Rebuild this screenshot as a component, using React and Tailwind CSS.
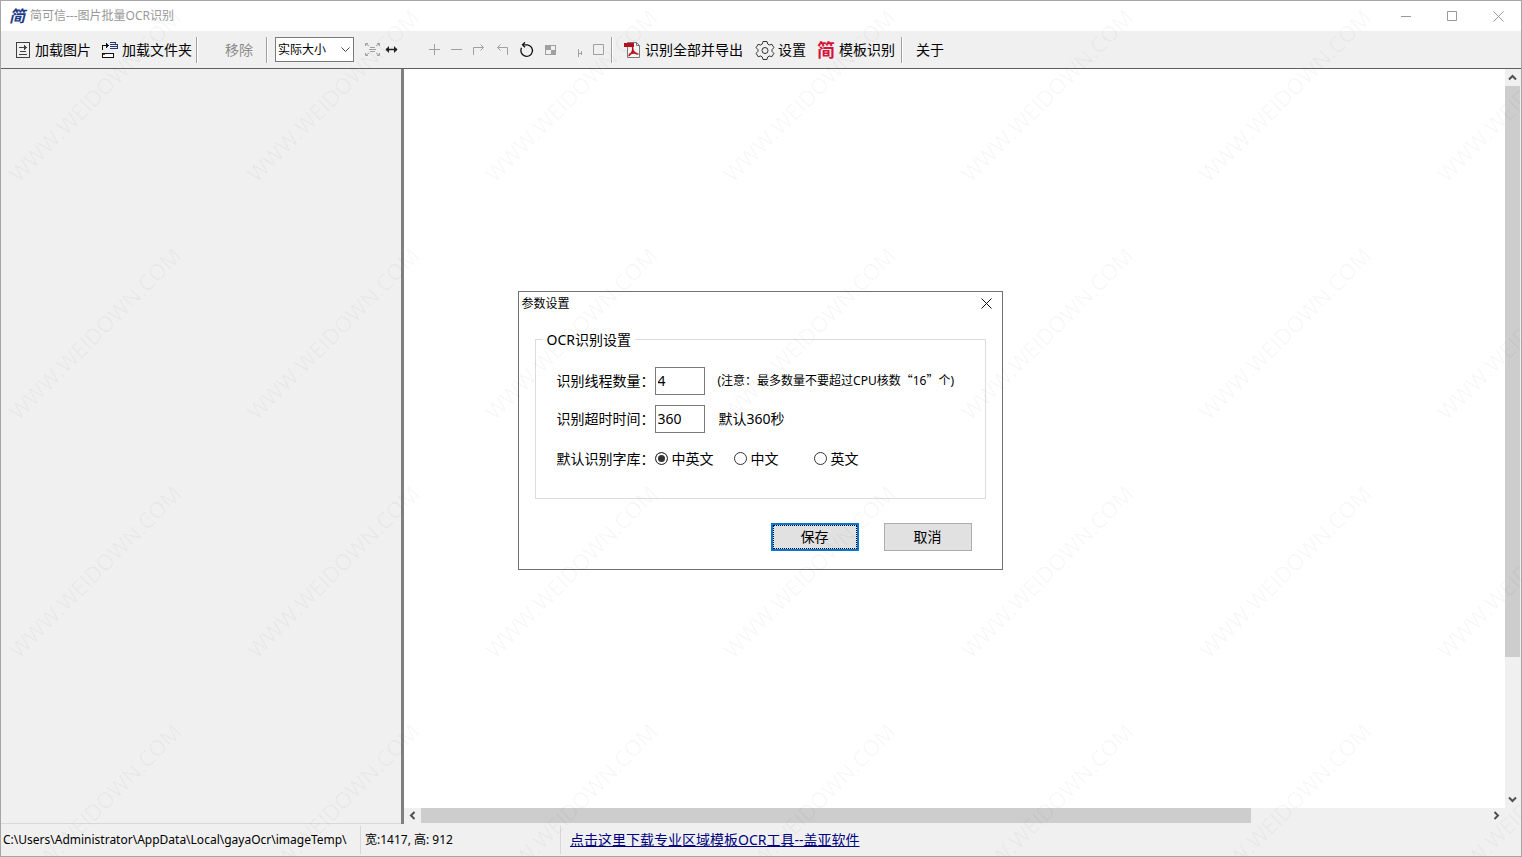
function LoadImageIcon() {
    return (
        <svg width="16" height="18" viewBox="0 0 16 18" fill="none" stroke="#404040" shapeRendering="crispEdges">
            <path d="M1.5 1.5h13v15h-13z" />
            <path d="M4 6.5h8M5 10.5h6M4 13.5h8" />
            <path d="M9.5 4v5M10.5 5v3" />
        </svg>
    )
}

function LoadFolderIcon() {
    return (
        <svg width="18" height="18" viewBox="0 0 18 18" fill="none" shapeRendering="crispEdges">
            <path d="M1.5 9V4.5H6" stroke="#111" />
            <path d="M5.5 2v5M6.5 3v3M7.5 4v1" stroke="#111" />
            <path d="M1.5 12.5h11v4h-11z" stroke="#111" fill="#fff" />
            <path d="M2 13.5h2" stroke="#e02020" />
            <path d="M9 1.5h5M9 3.5h7M9 5.5h7M9 7.5h7M14.5 1v2M16.5 3v5" stroke="#27357e" />
        </svg>
    )
}

function PdfIcon() {
    return (
        <svg width="18" height="18" viewBox="0 0 18 18" fill="none">
            <path d="M4.5 1.5h9l3 3v12h-12z" fill="#f6f6f6" stroke="#777" />
            <path d="M13.5 1.5v3h3" stroke="#777" />
            <path d="M1 2h10v4H1z" fill="#b5121b" />
            <path d="M9.5 6c1 3 0 6-4 9M9.5 8c1 3 3 5 6 5M6 13.5c2-1 5-2 8-1" stroke="#b5121b" strokeWidth="1.5" />
        </svg>
    )
}

function GearIcon() {
    return (
        <svg width="20" height="20" viewBox="0 0 20 20" fill="none" stroke="#333" strokeLinejoin="round">
            <path d="M8 1.5h4l.7 2.5 1.6 1 2.6-.7 2 3.400-1.9 1.9v1.8l1.9 1.9-2 3.400-2.6-.7-1.6 1-.7 2.5H8l-.7-2.5-1.6-1-2.6.7-2-3.400L3 11.4V9.6L1.1 7.7l2-3.400 2.6.7 1.6-1z" />
            <circle cx="10" cy="10.5" r="3" />
        </svg>
    )
}

function Chevron({ d }) {
    return (
        <svg width="9" height="9" viewBox="0 0 9 9" fill="none" stroke="#505050" strokeWidth="2">
            <path d={d} />
        </svg>
    )
}

function Separator() {
    return <div className="h-[26px] w-[2px] shrink-0 border-l border-[#a0a0a0] bg-white" />
}

function ToolButton({ icon, label, className = "" }) {
    return (
        <button className={`flex shrink-0 items-center text-sm whitespace-nowrap ${className}`}>
            {icon}
            <span>{label}</span>
        </button>
    )
}

function IconButton({ label, children, className = "" }) {
    return (
        <button aria-label={label} className={`flex h-4 shrink-0 items-center justify-center ${className}`}>
            {children}
        </button>
    )
}

function TitleBar() {
    return (
        <header className="flex h-[30px] shrink-0 items-center bg-white pl-2 text-xs text-[#999]">
            <span className="w-[21px] text-base leading-4 font-bold text-[#1f3b87] italic">简</span>
            <h1>简可信---图片批量OCR识别</h1>
            <div className="ml-auto flex">
                <button aria-label="最小化" className="flex h-[30px] w-[45px] items-center justify-center">
                    <svg width="11" height="11" stroke="#999"><path d="M0 5.5h10" /></svg>
                </button>
                <button aria-label="最大化" className="flex h-[30px] w-[46px] items-center justify-center">
                    <svg width="11" height="11" fill="none" stroke="#999"><path d="M.5.5h9v9h-9z" /></svg>
                </button>
                <button aria-label="关闭" className="flex h-[30px] w-[46px] items-center justify-center">
                    <svg width="11" height="11" stroke="#999"><path d="M.5.5l10 10M10.5.5l-10 10" /></svg>
                </button>
            </div>
        </header>
    )
}

function Toolbar() {
    return (
        <div className="flex h-[38px] shrink-0 items-center border-b border-[#606060] bg-[#f0f0f0] pl-[14px] text-black">
            <ToolButton icon={<LoadImageIcon />} label="加载图片" className="gap-1" />
            <ToolButton icon={<LoadFolderIcon />} label="加载文件夹" className="mr-1 ml-[10px] gap-[3px]" />
            <Separator />
            <button className="mr-[13px] ml-[27px] shrink-0 text-sm text-[#8c8c8c]">移除</button>
            <Separator />
            <div className="relative ml-[7px] shrink-0">
                <select aria-label="缩放" className="block h-[25px] w-[79px] appearance-none border border-[#7a7a7a] bg-white pl-[2px] text-xs">
                    <option>实际大小</option>
                </select>
                <svg className="pointer-events-none absolute top-[10px] right-1" width="9" height="6" fill="none" stroke="#444"><path d="M.5.5l4 4 4-4" /></svg>
            </div>
            <IconButton label="适合窗口" className="ml-[10px] w-4">
                <svg width="15" height="15" fill="none" stroke="#a0a0a0">
                    <path d="M.5 4V1.5H3M12 1.5h2.5V4M14.5 11v2.5H12M3 13.5H.5V11M1 2l3 2M14 2l-3 2M14 13l-3-2M1 13l3-2M5 5.5h5M4 7.5h7M5 9.5h5" />
                </svg>
            </IconButton>
            <IconButton label="适合宽度" className="ml-1 w-[14px]">
                <svg width="13" height="9" stroke="#222"><path d="M1 4.5h11" strokeWidth="1.5" /><path d="M4 1v7L.5 4.5zM9 1v7l3.5-3.5z" fill="#222" stroke="none" /></svg>
            </IconButton>
            <IconButton label="放大" className="ml-7 w-4">
                <svg width="11" height="11" stroke="#a0a0a0"><path d="M0 5.5h11M5.5 0v11" /></svg>
            </IconButton>
            <IconButton label="缩小" className="ml-[6px] w-4">
                <svg width="11" height="11" stroke="#a0a0a0"><path d="M0 5.5h11" /></svg>
            </IconButton>
            <IconButton label="右转" className="ml-[6px] w-4">
                <svg width="11" height="11" fill="none" stroke="#a0a0a0"><path d="M.5 11V3.5H10M7.5.5l3 3-3 3" /></svg>
            </IconButton>
            <IconButton label="左转" className="ml-2 w-4">
                <svg width="11" height="11" fill="none" stroke="#a0a0a0"><path d="M10.5 11V3.5H1M3.5.5l-3 3 3 3" /></svg>
            </IconButton>
            <IconButton label="重置" className="ml-2 w-4">
                <svg width="15" height="16" fill="none" stroke="#111" strokeWidth="1.3"><path d="M4 2.8h4.5a5.8 5.8 0 1 1-6 3" /><path d="M6 .3L3.500 2.8 6 5.3" /></svg>
            </IconButton>
            <IconButton label="背景" className="ml-2 w-4">
                <svg width="11" height="10" fill="#a0a0a0"><path d="M0 0h11v10H0z" /><path d="M6 1h4v4H6zM1 5h5v4H1z" fill="#f0f0f0" /></svg>
            </IconButton>
            <IconButton label="定位" className="ml-[14px] w-4">
                <svg width="7" height="14" fill="none" stroke="#a0a0a0"><path d="M1.5 6v8M1.5 10.5H4M4.5 8v4" /></svg>
            </IconButton>
            <IconButton label="选区" className="ml-[2px] w-4">
                <svg width="11" height="11" fill="none" stroke="#a0a0a0"><path d="M.5.5h10v10H.5z" /></svg>
            </IconButton>
            <div className="ml-[5px]"><Separator /></div>
            <ToolButton icon={<PdfIcon />} label="识别全部并导出" className="ml-[10px] gap-1" />
            <ToolButton icon={<GearIcon />} label="设置" className="ml-3 gap-[3px]" />
            <ToolButton
                icon={<span className="text-lg leading-4 font-bold text-[#d4143c]">简</span>}
                label="模板识别"
                className="mr-[6px] ml-[11px] gap-1"
            />
            <Separator />
            <ToolButton label="关于" className="ml-[13px]" />
        </div>
    )
}

function Workspace() {
    return (
        <main className="flex min-h-0 flex-1">
            <aside className="w-[400px] shrink-0 border-b border-[#d8d8d8] bg-[#f0f0f0]" />
            <div className="w-[3px] shrink-0 bg-[#808080]" />
            <div className="flex min-w-0 flex-1 flex-col">
                <div className="flex min-h-0 flex-1">
                    <div className="flex-1 bg-white" />
                    <div className="flex w-4 shrink-0 flex-col bg-[#f0f0f0] pr-px">
                        <button aria-label="向上滚动" className="flex h-[17px] items-center justify-center"><Chevron d="M1 6.5L4.5 3 8 6.5" /></button>
                        <div className="flex-1">
                            <div className="h-[81%] bg-[#cdcdcd]" />
                        </div>
                        <button aria-label="向下滚动" className="flex h-[17px] items-center justify-center"><Chevron d="M1 2.5L4.5 6 8 2.5" /></button>
                    </div>
                </div>
                <div className="flex h-4 shrink-0 border-b border-[#f0f0f0] bg-[#f0f0f0] pr-4">
                    <button aria-label="向左滚动" className="flex w-[17px] items-center justify-center"><Chevron d="M6.5 1L3 4.5 6.5 8" /></button>
                    <div className="flex-1">
                        <div className="h-full w-7/9 bg-[#cdcdcd]" />
                    </div>
                    <button aria-label="向右滚动" className="flex w-[17px] items-center justify-center"><Chevron d="M2.5 1L6 4.5 2.5 8" /></button>
                </div>
            </div>
        </main>
    )
}

function StatusBar() {
    return (
        <footer className="flex h-8 shrink-0 items-center bg-[#f0f0f0] text-xs whitespace-nowrap text-black">
            <span className="flex h-7 w-[360px] shrink-0 items-center overflow-hidden border-r border-[#d8d8d8] pl-[2px]">
                C:\Users\Administrator\AppData\Local\gayaOcr\imageTemp\
            </span>
            <span className="flex h-7 w-[200px] shrink-0 items-center border-r border-[#d8d8d8] pl-1">宽:1417, 高: 912</span>
            <a href="#download" className="ml-[9px] text-sm text-[#000080] underline">点击这里下载专业区域模板OCR工具--盖亚软件</a>
        </footer>
    )
}

function Watermark() {
    return (
        <div
            aria-hidden="true"
            className='pointer-events-none absolute inset-0 grid auto-rows-[238px] grid-cols-[repeat(7,238px)] overflow-hidden font-["Open_Sans",sans-serif]'
        >
            {Array.from({ length: 28 }, (_, i) => (
                <div key={i} className="flex h-[188px] w-[188px] items-center justify-center">
                    <span className="-rotate-45 text-[22px] whitespace-nowrap text-black/4">WWW.WEIDOWN.COM</span>
                </div>
            ))}
        </div>
    )
}

function Field({ id, label, value, children }) {
    return (
        <div className="flex h-7 items-center">
            <label htmlFor={id} className="w-[98px] shrink-0 whitespace-nowrap">{label}</label>
            <input id={id} defaultValue={value} className="h-7 w-[50px] border border-[#7a7a7a] bg-white px-[2px] text-sm outline-none" />
            {children}
        </div>
    )
}

function Radio({ label, checked, className = "" }) {
    return (
        <label className={`flex items-center gap-1 ${className}`}>
            <input
                type="radio"
                name="lang"
                defaultChecked={checked}
                className="h-[13px] w-[13px] appearance-none rounded-full border border-[#333] bg-white checked:bg-[#333] checked:shadow-[inset_0_0_0_2px_white]"
            />
            {label}
        </label>
    )
}

function SettingsDialog() {
    return (
        <div className="absolute inset-0 flex items-center justify-center pt-[3px] pr-[2px]">
            <div role="dialog" aria-labelledby="dlg-title" className="w-[485px] border border-[#707070] bg-white pb-[18px] text-sm text-black">
                <div className="flex h-6 items-center justify-between pr-[9px] pl-[3px]">
                    <h2 id="dlg-title" className="text-xs">参数设置</h2>
                    <button aria-label="关闭对话框">
                        <svg width="12" height="12" stroke="#111"><path d="M.5.5l10 10M10.5.5l-10 10" /></svg>
                    </button>
                </div>
                <fieldset className="mx-4 mt-3 flex h-[171px] flex-col gap-[10px] border border-[#dcdcdc] px-[21px] pt-[15px]">
                    <legend className="-ml-[14px] px-1 leading-6">OCR识别设置</legend>
                    <Field id="threads" label="识别线程数量：" value="4">
                        <span className="ml-[13px] text-xs whitespace-nowrap">
                            (注意：最多数量不要超过CPU核数<span className='font-["Noto_Sans_CJK_SC",sans-serif]'>“</span>16<span className='font-["Noto_Sans_CJK_SC",sans-serif]'>”</span>个)
                        </span>
                    </Field>
                    <Field id="timeout" label="识别超时时间：" value="360">
                        <span className="ml-[14px]">默认360秒</span>
                    </Field>
                    <div role="radiogroup" aria-labelledby="lang-label" className="flex h-8 items-center">
                        <span id="lang-label" className="w-[98px] shrink-0">默认识别字库：</span>
                        <Radio label="中英文" checked className="w-[79px]" />
                        <Radio label="中文" className="w-20" />
                        <Radio label="英文" />
                    </div>
                </fieldset>
                <div className="mt-6 flex justify-end gap-[25px] pr-[30px]">
                    <button className="h-7 w-[88px] border-2 border-[#0078d7] bg-[#e1e1e1] outline-1 -outline-offset-3 outline-black outline-dotted">保存</button>
                    <button className="h-7 w-[88px] border border-[#adadad] bg-[#e1e1e1]">取消</button>
                </div>
            </div>
        </div>
    )
}

export default function App() {
    return (
        <div className='relative flex h-screen flex-col overflow-hidden border border-[#a6a6a6] bg-white font-["Noto_Sans","Noto_Sans_CJK_SC",sans-serif]'>
            <TitleBar />
            <Toolbar />
            <Workspace />
            <StatusBar />
            <SettingsDialog />
            <Watermark />
        </div>
    )
}
